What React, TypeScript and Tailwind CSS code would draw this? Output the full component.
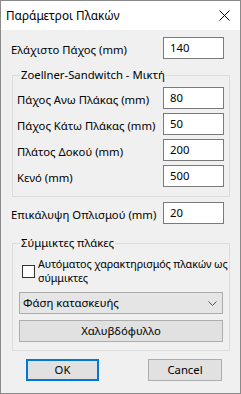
import React from "react";

const font = { fontFamily: '"Noto Sans", "Open Sans", sans-serif' };

function Field({ value }: { value: string }) {
  return (
    <div className="w-[61px] h-[22px] bg-white border border-[#7a7a7a] pl-[6px] pt-[1px] leading-[18px] shrink-0">
      {value}
    </div>
  );
}

function Row({ label, value }: { label: string; value: string }) {
  return (
    <div className="flex items-center justify-between h-[22px]">
      <span className="leading-[14px] pt-[3px] whitespace-nowrap">{label}</span>
      <Field value={value} />
    </div>
  );
}

export default function App() {
  return (
    <div
      className="w-[241px] h-[394px] border border-[#8a8a8a] bg-[#f0f0f0] flex flex-col text-[11.3px] text-black"
      style={font}
    >
      <div className="h-[29px] bg-white flex items-center justify-between pl-[5px] pr-[10px] shrink-0">
        <span className="text-[11.8px]">Παράμετροι Πλακών</span>
        <svg width="11" height="11" viewBox="0 0 11 11">
          <path d="M0.5 0.5 L10.5 10.5 M10.5 0.5 L0.5 10.5" stroke="#000" strokeWidth="1" />
        </svg>
      </div>

      <div className="ml-[10px] mr-[16px] mt-[7px]">
        <Row label="Ελάχιστο Πάχος (mm)" value="140" />
      </div>

      <div className="relative ml-[11px] mt-[16px] w-[218px] h-[122px] border border-[#dcdcdc] pl-[4px] pr-[5px] pt-[11px] flex flex-col gap-[4px]">
        <span className="absolute left-[7px] top-[-9px] bg-[#f0f0f0] px-[1px] leading-[16px] whitespace-nowrap">
          Zoellner-Sandwitch - Μικτή
        </span>
        <Row label="Πάχος Ανω Πλάκας (mm)" value="80" />
        <Row label="Πάχος Κάτω Πλάκας (mm)" value="50" />
        <Row label="Πλάτος Δοκού (mm)" value="200" />
        <Row label="Κενό (mm)" value="500" />
      </div>

      <div className="ml-[10px] mr-[16px] mt-[5px]">
        <Row label="Επικάλυψη Οπλισμού (mm)" value="20" />
      </div>

      <div className="relative ml-[11px] mt-[19px] w-[218px] h-[108px] border border-[#dcdcdc] pl-[6px] pr-[6px] pt-[13px] flex flex-col">
        <span className="absolute left-[7px] top-[-9px] bg-[#f0f0f0] px-[1px] leading-[16px] whitespace-nowrap">
          Σύμμικτες πλάκες
        </span>
        <div className="flex items-center pl-[3px]">
          <div className="w-[13px] h-[13px] bg-white border border-[#333] shrink-0" />
          <div className="ml-[3px] leading-[14px] text-[10.7px] tracking-[-0.1px]">
            <div className="whitespace-nowrap">Αυτόματος χαρακτηρισμός πλακών ως</div>
            <div>σύμμικτες</div>
          </div>
        </div>
        <div className="mt-[7px] h-[22px] bg-[#e5e5e5] border border-[#acacac] flex items-center justify-between pl-[3px] pr-[5px]">
          <span>Φάση κατασκευής</span>
          <svg width="9" height="5" viewBox="0 0 9 5">
            <path d="M0.5 0.5 L4.5 4.5 L8.5 0.5" stroke="#555" strokeWidth="1" fill="none" />
          </svg>
        </div>
        <div className="mt-[6px] h-[22px] bg-[#e1e1e1] border border-[#adadad] flex items-center justify-center">
          Χαλυβδόφυλλο
        </div>
      </div>

      <div className="flex mt-[8px] ml-[25px]">
        <div className="w-[73px] h-[22px] bg-[#e1e1e1] border-2 border-[#0078d7] flex items-center justify-center">
          OK
        </div>
        <div className="ml-[49px] w-[74px] h-[22px] bg-[#e1e1e1] border border-[#adadad] flex items-center justify-center">
          Cancel
        </div>
      </div>
    </div>
  );
}
